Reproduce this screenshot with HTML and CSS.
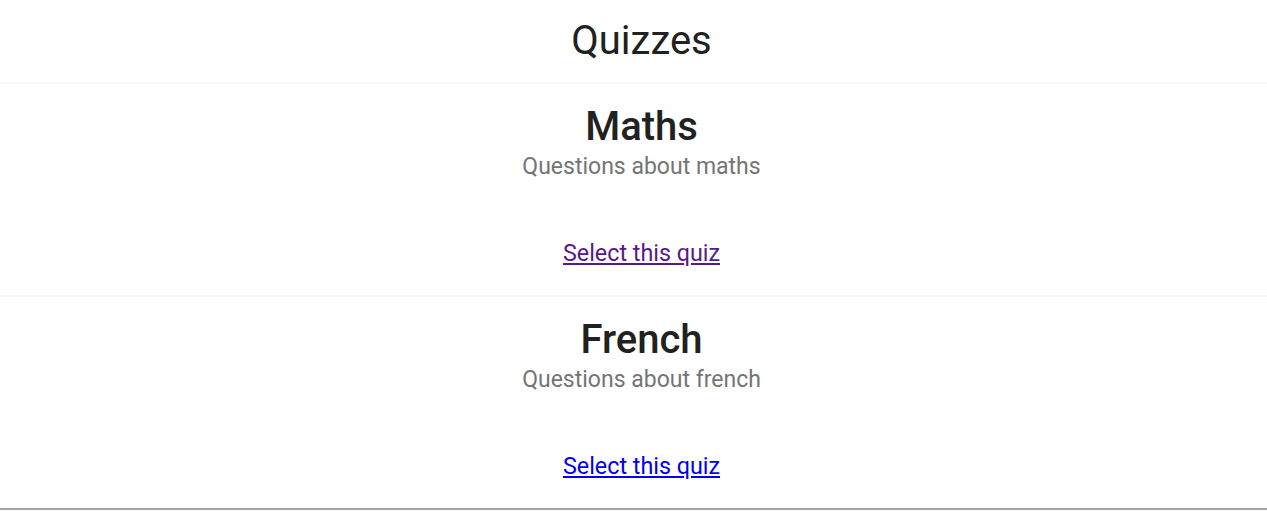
FILE: index.html
```html
<!DOCTYPE html>
<html>
<head>
<meta charset="utf-8">
<link rel="stylesheet" href="styles.css">
</head>
<body>
<div class="page">
  <header class="header"><h1 class="title">Quizzes</h1></header>
  <section class="quiz">
    <h2 class="quiz-name">Maths</h2>
    <p class="quiz-desc">Questions about maths</p>
    <a class="quiz-link visited" href="#">Select this quiz</a>
  </section>
  <section class="quiz">
    <h2 class="quiz-name">French</h2>
    <p class="quiz-desc">Questions about french</p>
    <a class="quiz-link" href="#">Select this quiz</a>
  </section>
</div>
</body>
</html>
```
FILE: styles.css
```css
html, body { margin: 0; padding: 0; background: #fff; }
body { font-family: Roboto, "Liberation Sans", sans-serif; color: #212121; }
.page { display: flex; flex-direction: column; border-bottom: 2px solid #a3a3a3; box-shadow: 0 2px 2px rgba(0,0,0,0.06); }
.header { height: 82px; display: flex; align-items: center; justify-content: center; padding-left: 16px; }
.title { margin: 0; font-size: 40px; font-weight: 400; line-height: 48px; }
.quiz { border-top: 2px solid #f7f7f7; display: flex; flex-direction: column; align-items: center; padding: 19px 0 25px 16px; height: 167px; }
.quiz-name { margin: 0; font-size: 40px; font-weight: 500; line-height: 48px; }
.quiz-desc { margin: 3px 0 0; font-size: 23px; line-height: 26px; color: #757575; }
.quiz-link { margin-top: 60px; font-size: 23.3px; line-height: 27px; color: #0000ee; text-decoration: underline; }
.quiz-link.visited { color: #551a8b; }
```
